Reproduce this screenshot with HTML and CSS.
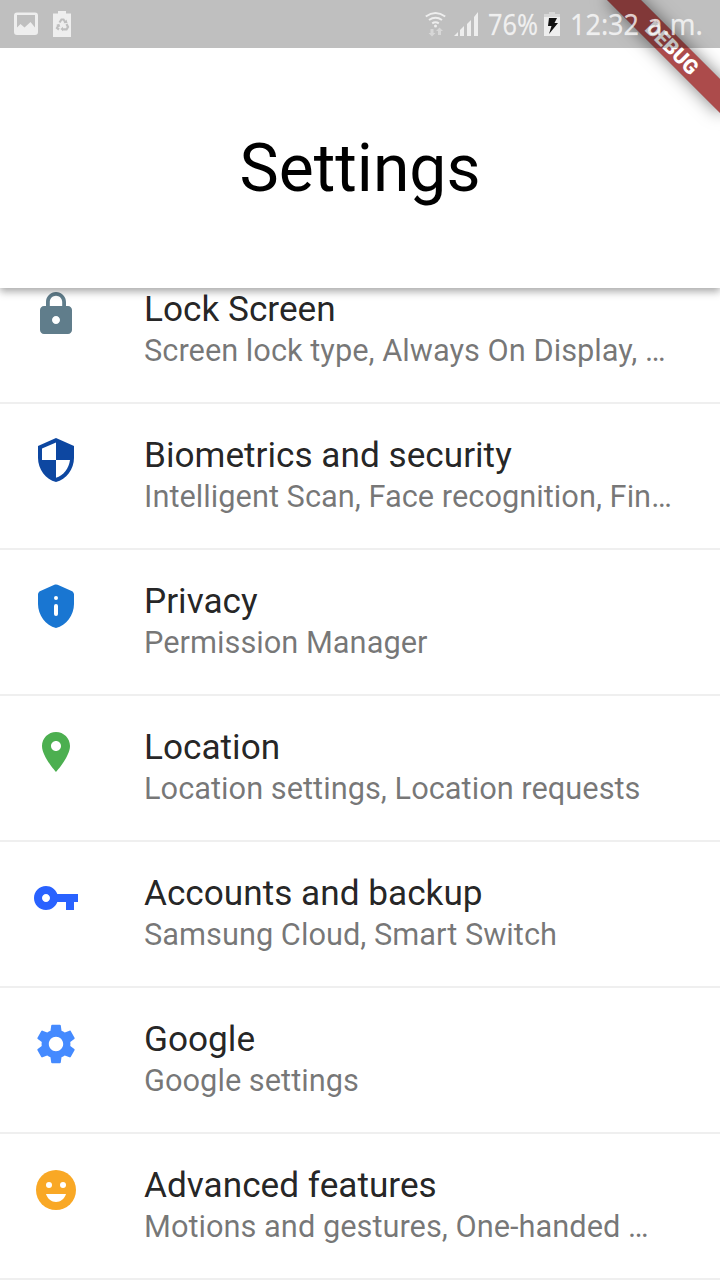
FILE: index.html
```html
<!DOCTYPE html>
<html lang="en">
<head>
<meta charset="utf-8">
<title>Settings</title>
<link rel="stylesheet" href="styles.css">
</head>
<body>
<div class="screen">
  <header class="app-bar"><h1 class="app-title">Settings</h1></header>
  <main class="list">
    <div class="row">
      <svg class="icon lock" viewBox="0 0 24 24"><path d="M18 8h-1V6c0-2.760-2.240-5-5-5S7 3.240 7 6v2H6c-1.100 0-2 .9-2 2v10c0 1.100.9 2 2 2h12c1.100 0 2-.9 2-2V10c0-1.100-.9-2-2-2zm-6 9c-1.100 0-2-.9-2-2s.9-2 2-2 2 .9 2 2-.9 2-2 2zm3.100-9H8.900V6c0-1.710 1.390-3.100 3.100-3.100s3.100 1.390 3.100 3.100v2z"/></svg>
      <div class="text"><div class="title">Lock Screen</div><div class="subtitle">Screen lock type, Always On Display, …</div></div>
    </div>
    <div class="row">
      <svg class="icon security" viewBox="0 0 24 24"><path d="M12 1L3 5v6c0 5.550 3.840 10.740 9 12 5.160-1.260 9-6.450 9-12V5l-9-4zm0 10.990h7c-.53 4.120-3.280 7.790-7 8.940V12H5V6.300l7-3.110v8.800z"/></svg>
      <div class="text"><div class="title">Biometrics and security</div><div class="subtitle">Intelligent Scan, Face recognition, Fin…</div></div>
    </div>
    <div class="row">
      <svg class="icon privacy" viewBox="0 0 24 24"><path d="M12 1.200c-.3 0-.55.060-.8.170l-7 3.110C3.480 4.800 3 5.510 3 6.300V11c0 5.550 3.840 10.740 9 12 5.160-1.260 9-6.450 9-12V6.300c0-.79-.47-1.500-1.190-1.820l-7-3.110a2 2 0 0 0-.81-.17z"/><circle class="cutout" cx="12" cy="8" r="1"/><rect class="cutout" x="11" y="11" width="2" height="6" rx="1"/></svg>
      <div class="text"><div class="title">Privacy</div><div class="subtitle">Permission Manager</div></div>
    </div>
    <div class="row">
      <svg class="icon location" viewBox="0 0 24 24"><path d="M12 2C8.130 2 5 5.130 5 9c0 5.250 7 13 7 13s7-7.750 7-13c0-3.870-3.130-7-7-7zm0 9.500c-1.380 0-2.500-1.120-2.500-2.500s1.120-2.500 2.500-2.500 2.500 1.120 2.500 2.500-1.120 2.500-2.500 2.500z"/></svg>
      <div class="text"><div class="title">Location</div><div class="subtitle">Location settings, Location requests</div></div>
    </div>
    <div class="row">
      <svg class="icon key" viewBox="0 0 24 24"><path d="M12.650 10C11.830 7.670 9.610 6 7 6c-3.310 0-6 2.690-6 6s2.690 6 6 6c2.610 0 4.830-1.670 5.650-4H17v4h4v-4h2v-4H12.650zM7 14c-1.100 0-2-.9-2-2s.9-2 2-2 2 .9 2 2-.9 2-2 2z"/></svg>
      <div class="text"><div class="title">Accounts and backup</div><div class="subtitle">Samsung Cloud, Smart Switch</div></div>
    </div>
    <div class="row">
      <svg class="icon google" viewBox="0 0 24 24"><path d="M19.140 12.940c.04-.3.060-.61.060-.94 0-.32-.02-.64-.07-.94l2.030-1.580c.18-.14.230-.41.120-.61l-1.920-3.320c-.12-.22-.37-.29-.59-.22l-2.390.960c-.5-.38-1.030-.7-1.620-.94l-.36-2.540c-.04-.24-.24-.41-.48-.41h-3.840c-.24 0-.43.170-.47.410l-.36 2.540c-.59.240-1.130.570-1.620.940l-2.390-.96c-.22-.08-.47 0-.59.220L2.740 8.870c-.12.210-.08.470.120.610l2.030 1.580c-.05.3-.09.630-.09.940s.02.640.070.940l-2.030 1.580c-.18.140-.23.410-.12.610l1.920 3.320c.12.220.370.290.590.220l2.390-.96c.5.380 1.030.7 1.620.940l.36 2.540c.05.240.240.410.480.410h3.840c.24 0 .44-.17.470-.41l.36-2.540c.59-.24 1.130-.56 1.620-.94l2.390.960c.22.080.470 0 .59-.22l1.920-3.320c.12-.22.070-.47-.12-.61l-2.010-1.580zM12 15.600c-1.980 0-3.600-1.620-3.600-3.600s1.620-3.600 3.600-3.600 3.600 1.620 3.600 3.600-1.620 3.600-3.600 3.600z"/></svg>
      <div class="text"><div class="title">Google</div><div class="subtitle">Google settings</div></div>
    </div>
    <div class="row">
      <svg class="icon smile" viewBox="0 0 24 24"><circle cx="12" cy="12" r="10"/><g class="cutout"><circle cx="8.500" cy="9.500" r="1.500"/><circle cx="15.500" cy="9.500" r="1.500"/><path d="M7 14h10c-.8 2.400-2.700 4-5 4s-4.200-1.600-5-4z"/></g></svg>
      <div class="text"><div class="title">Advanced features</div><div class="subtitle">Motions and gestures, One-handed …</div></div>
    </div>
  </main>
  <div class="ribbon">DEBUG</div>
  <div class="status-bar">
    <svg class="status-art" viewBox="0 0 720 48">
      <g class="light">
        <path fill-rule="evenodd" d="M17 12.500h18a3 3 0 0 1 3 3V32a3 3 0 0 1-3 3H17a3 3 0 0 1-3-3V15.500a3 3 0 0 1 3-3zM17 15v12.500l3.500-3.500 4 3.500 6-5.500 4.500 5.500V15z"/>
        <path d="M53 13.500h5V11h8v2.500h5V37H53z"/>
        <path d="M454 36l4-4v4zM460 30l4-4v10h-4zM467 24l4-4v16h-4zM474 17l4-5v24h-4z"/>
        <path d="M544 17h16v19h-16z"/>
      </g>
      <g class="recycle">
        <path d="M59.500 22.500l2-3h2l2 3M66.500 24l1.500 3-1.500 2.300h-4M59 29.500l-2-1.500 1.700-3"/>
        <path class="recycle-tip" d="M63.500 23.300l4-.2-1-3.500zM63 26.800v4.500l-2.500-2.200zM56 25l3.300-1.300 1 3.300z"/>
      </g>
      <g class="waves"><path d="M425.800 16.500q9.700-6.800 19.400 0M429 20q6.500-4.500 13 0M432.200 23.300q3.300-2.200 6.600 0"/></g>
      <circle class="light" cx="435.500" cy="26" r="1.500"/>
      <path class="dim" d="M430.500 29h3v4h2l-3.500 3.500-3.500-3.500h2zM438 35v-4h-2l3.500-3.500L443 31h-2v4zM544 14h5v-2h6v2h5v3h-16z"/>
      <path class="bolt" d="M549 18h8l-2.500 5h3.500l-9 11 2.500-8H548z"/>
      <g class="status-text">
        <text x="488" y="35" textLength="50" lengthAdjust="spacingAndGlyphs">76%</text>
        <text x="570" y="35" textLength="69" lengthAdjust="spacingAndGlyphs">12:32</text>
        <text x="647" y="35" textLength="56" lengthAdjust="spacingAndGlyphs">a.m.</text>
      </g>
    </svg>
  </div>
</div>
</body>
</html>
```
FILE: styles.css
```css
body { margin: 0; background: #fff; font-family: Roboto, "Liberation Sans", sans-serif; }
.screen { position: relative; width: 720px; height: 1280px; overflow: hidden; display: flex; flex-direction: column; }
.app-bar { position: relative; z-index: 1; box-sizing: border-box; flex: none; height: 288px; padding-top: 50px; display: flex; align-items: center; justify-content: center; background: #fff; box-shadow: 0 5px 8px rgba(0,0,0,.18), 0 2px 7px rgba(0,0,0,.2); }
.app-title { margin: 0; font-size: 66px; line-height: 78px; font-weight: 400; color: #000; }
.list { margin-top: -30px; }
.row { box-sizing: border-box; height: 146px; padding: 32px 32px 0; display: flex; gap: 64px; border-bottom: 2px solid #efefef; }
.icon { width: 48px; height: 48px; flex: none; }
.lock { fill: #607d8b; }
.security { fill: #0d47a1; }
.privacy { fill: #1976d2; }
.location { fill: #4caf50; }
.key { fill: #2962ff; }
.google { fill: #448aff; }
.smile { fill: #f9a825; }
.cutout { fill: #fff; }
.text { white-space: nowrap; }
.title { font-size: 35.2px; line-height: 42px; color: rgba(0,0,0,.87); margin-top: -2px; }
.subtitle { font-size: 30.8px; line-height: 42px; color: rgba(0,0,0,.54); }
.ribbon { position: absolute; z-index: 2; left: 592px; top: 36px; width: 160px; height: 24px; transform: rotate(45deg); background: rgba(148,23,23,.776); box-shadow: 0 0 17px rgba(0,0,0,.5); color: #fff; font-size: 20.4px; line-height: 24px; font-weight: 900; text-align: center; }
.status-bar { position: absolute; z-index: 3; top: 0; left: 0; width: 720px; height: 48px; background: rgba(0,0,0,.25); }
.status-art { display: block; width: 720px; height: 48px; }
.light { fill: #eee; }
.dim { fill: #d7d7d7; }
.bolt { fill: #111; }
.waves { fill: none; stroke: #eee; stroke-width: 2; }
.recycle { fill: none; stroke: #bfbfbf; stroke-width: 2.200; }
.recycle-tip { fill: #bfbfbf; stroke: none; }
.status-text { fill: rgba(255,255,255,.75); stroke: rgba(255,255,255,.3); stroke-width: .5; font-family: "Noto Sans", sans-serif; font-size: 29px; }
```
